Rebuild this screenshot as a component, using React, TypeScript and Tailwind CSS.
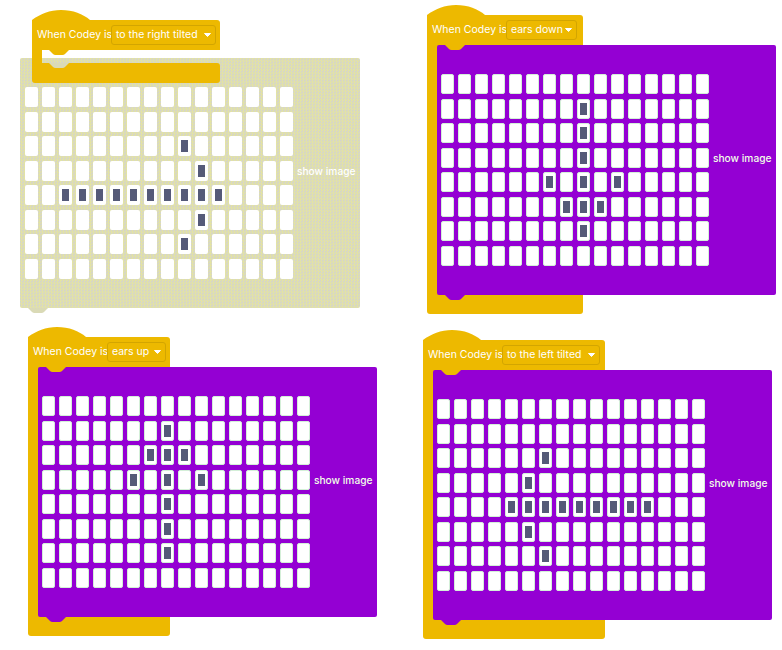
const YELLOW = "#edb900";

type Dot = [number, number];

function Bump({ color, className }: { color: string; className: string }) {
  return (
    <svg width="20" height="5" viewBox="0 0 20 5" className={className}>
      <path d="M0 0 L4 4 Q5 5 6.5 5 L13.5 5 Q15 5 16 4 L20 0 Z" fill={color} />
    </svg>
  );
}

function Caret() {
  return (
    <svg width="7" height="4" viewBox="0 0 7 4" className="ml-[6px] shrink-0">
      <path d="M0.5 0.5 L6.5 0.5 L3.5 3.5 Z" fill="#fff" stroke="#fff" strokeLinejoin="round" />
    </svg>
  );
}

function Hat({ label, textWidth }: { label: string; textWidth: number }) {
  return (
    <>
      <svg width="58" height="10" viewBox="0 0 58 10" className="block">
        <path d="M0 10 C8 4 18 0 29 0 C41 0 51 4 58 10 Z" fill={YELLOW} />
      </svg>
      <div className="flex h-[30px] items-center rounded-tr-[3px] bg-[#edb900] pl-[5px] pr-[4px] text-[10.5px] text-white">
        <span className="w-[74px] shrink-0 whitespace-nowrap">When Codey is</span>
        <div className="flex h-5 items-center rounded-[3px] border border-[#d3a500] pl-[4px] pr-[4px]">
          <span className="whitespace-nowrap" style={{ width: textWidth }}>
            {label}
          </span>
          <Caret />
        </div>
      </div>
    </>
  );
}

function Grid({ dots, purple }: { dots: Dot[]; purple: boolean }) {
  const cells = [];
  for (let r = 0; r < 8; r++) {
    for (let c = 0; c < 16; c++) {
      const on = dots.some((d) => d[0] === r && d[1] === c);
      cells.push(
        <div
          key={`${r}-${c}`}
          className={`flex h-5 w-[13px] items-center justify-center rounded-[2px] bg-white ${
            purple ? "border border-[#d4efd8]" : ""
          }`}
        >
          {on && <div className="h-3 w-[7px] shrink-0 bg-[#555a78]" />}
        </div>
      );
    }
  }
  return (
    <div className="grid shrink-0 grid-cols-[repeat(16,13px)] gap-x-1 gap-y-[4.5px]">
      {cells}
    </div>
  );
}

function Panel({ dots, purple }: { dots: Dot[]; purple: boolean }) {
  return (
    <div
      className={`relative flex h-[250px] items-start gap-1 rounded-[2px] pt-[29px] ${
        purple
          ? "w-[339px] bg-[#9400d3] pl-1 text-[#f2ffe8]"
          : "w-[340px] bg-[#dcdcb6] bg-[image:repeating-conic-gradient(#e2e2a6_0_25%,#d6d6c6_0_50%)] bg-[length:3px_3px] pl-[5px] text-white"
      }`}
    >
      <Grid dots={dots} purple={purple} />
      <span className="mt-[77px] whitespace-nowrap text-[10.2px] font-medium">show image</span>
      <Bump color={purple ? "#9400d3" : "#dadab6"} className="absolute left-2 top-full" />
    </div>
  );
}

function Block({
  label,
  textWidth,
  width,
  dots,
  className,
}: {
  label: string;
  textWidth: number;
  width: number;
  dots: Dot[];
  className: string;
}) {
  return (
    <div className={className} style={{ width }}>
      <Hat label={label} textWidth={textWidth} />
      <div className="relative rounded-b-[3px] bg-[#edb900] pb-[19px] pl-[10px]">
        <Panel dots={dots} purple />
        <Bump color={YELLOW} className="absolute left-[18px] top-0" />
      </div>
    </div>
  );
}

function GhostBlock({ dots }: { dots: Dot[] }) {
  return (
    <div className="relative ml-5 mt-[58px]">
      <Panel dots={dots} purple={false} />
      <div className="absolute left-3 top-[-48px] w-[188px]">
        <Hat label="to the right tilted" textWidth={82} />
        <div className="relative h-[13px] w-[10px] bg-[#edb900]">
          <Bump color={YELLOW} className="absolute left-[17px] top-0" />
        </div>
        <div className="relative h-5 rounded-b-[3px] rounded-tr-[3px] bg-[#edb900]">
          <Bump color="#dadab6" className="absolute left-[17px] top-0" />
        </div>
      </div>
    </div>
  );
}

const tiltRight: Dot[] = [
  [2, 9],
  [3, 10],
  [4, 2],
  [4, 3],
  [4, 4],
  [4, 5],
  [4, 6],
  [4, 7],
  [4, 8],
  [4, 9],
  [4, 10],
  [4, 11],
  [5, 10],
  [6, 9],
];

const earsDown: Dot[] = [
  [1, 8],
  [2, 8],
  [3, 8],
  [4, 6],
  [4, 8],
  [4, 10],
  [5, 7],
  [5, 8],
  [5, 9],
  [6, 8],
];

const earsUp: Dot[] = [
  [1, 7],
  [2, 6],
  [2, 7],
  [2, 8],
  [3, 5],
  [3, 7],
  [3, 9],
  [4, 7],
  [5, 7],
  [6, 7],
];

const tiltLeft: Dot[] = [
  [2, 6],
  [3, 5],
  [4, 4],
  [4, 5],
  [4, 6],
  [4, 7],
  [4, 8],
  [4, 9],
  [4, 10],
  [4, 11],
  [4, 12],
  [5, 5],
  [6, 6],
];

export default function App() {
  return (
    <div className="h-[650px] w-[782px] overflow-hidden bg-white font-['Inter','Liberation_Sans',sans-serif]">
      <div className="grid h-[320px] grid-cols-[400px_1fr] items-start">
        <GhostBlock dots={tiltRight} />
        <Block
          label="ears down"
          textWidth={48}
          width={156}
          dots={earsDown}
          className="ml-[27px] mt-[5px]"
        />
      </div>
      <div className="grid grid-cols-[400px_1fr] items-start">
        <Block
          label="ears up"
          textWidth={36}
          width={142}
          dots={earsUp}
          className="ml-7 mt-[7px]"
        />
        <Block
          label="to the left tilted"
          textWidth={75}
          width={182}
          dots={tiltLeft}
          className="ml-[23px] mt-[10px]"
        />
      </div>
    </div>
  );
}
